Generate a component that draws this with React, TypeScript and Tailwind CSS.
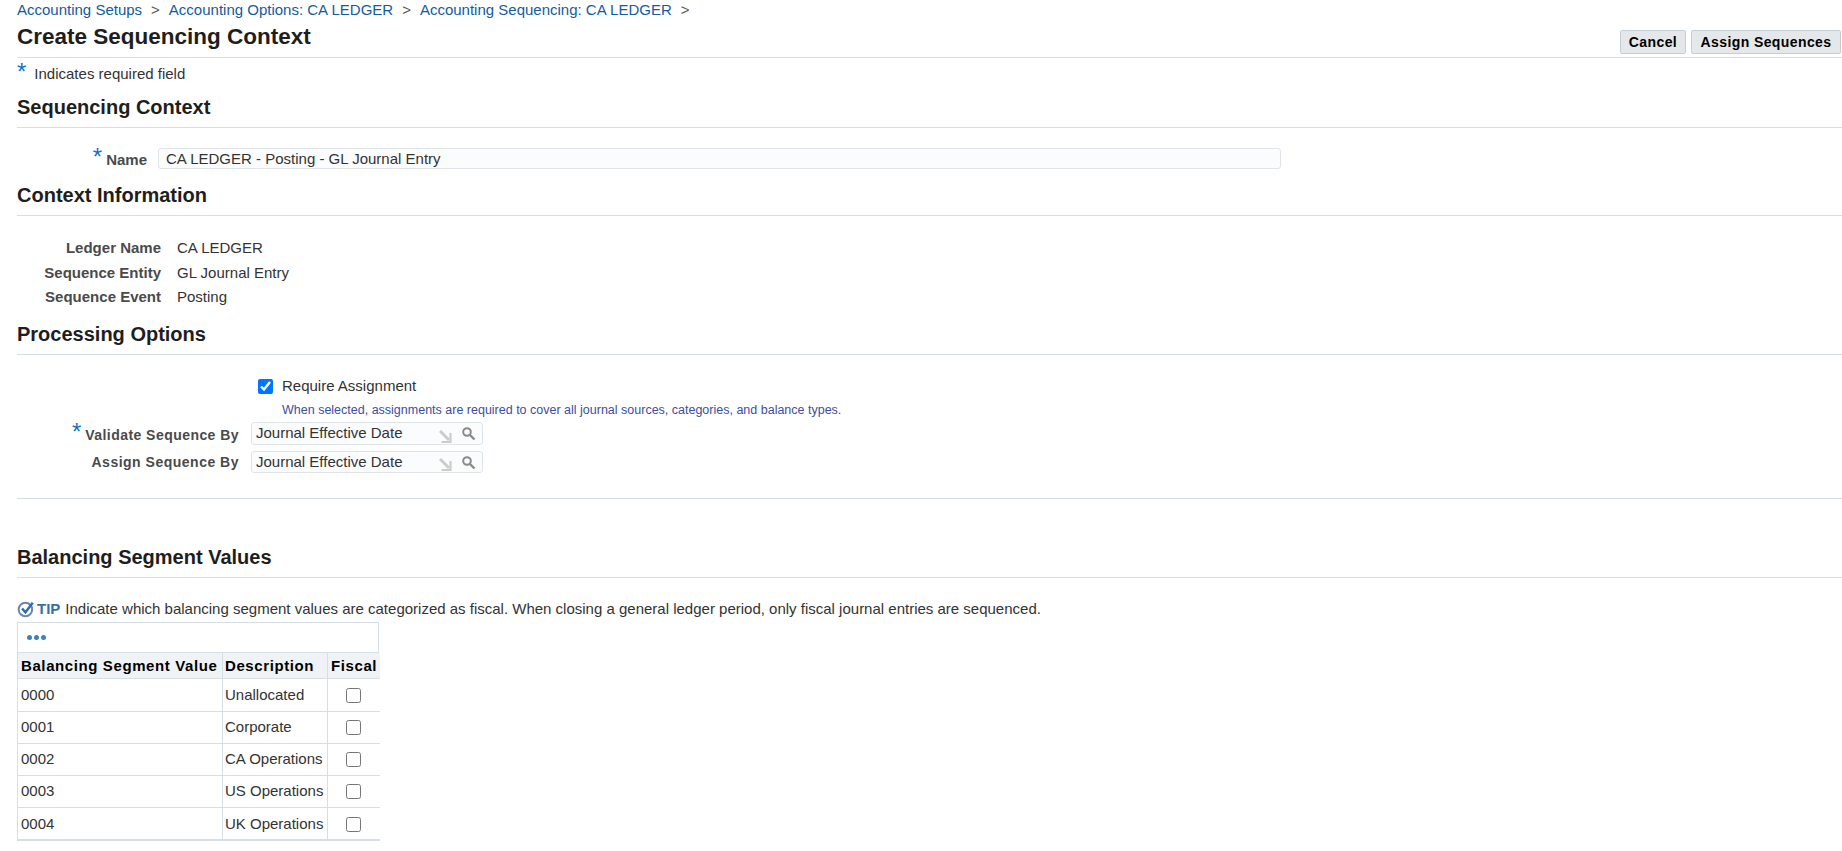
import React, { FC } from "react";

const Star = ({ className = "" }: { className?: string }) => (
  <span className={`text-[24px] leading-[14px] font-normal text-[#0f72c7] ${className}`}>*</span>
);

const SectionHeading = ({ title, className = "" }: { title: string; className?: string }) => (
  <div className={`flex h-[36px] items-center border-b border-[#d6dfe6] pb-[5px] ${className}`}>
    <h2 className="text-[20px] font-bold leading-[22px] text-[#1e1e1e]">{title}</h2>
  </div>
);

const SearchIcon = () => (
  <svg width="15" height="15" viewBox="0 0 15 15" fill="none" stroke="#8a8a8a" strokeWidth="2">
    <circle cx="6" cy="6" r="3.8" />
    <path d="M9 9l4.5 4.5" strokeWidth="2.4" />
  </svg>
);

const ArrowIcon = () => (
  <svg width="13" height="13" viewBox="0 0 13 13" fill="none">
    <path d="M1 1l9 9" stroke="#cccccc" strokeWidth="3" />
    <path d="M11.5 3v9h-9" stroke="#cccccc" strokeWidth="2.2" />
  </svg>
);

const LovInput = ({ value }: { value: string }) => (
  <div className="flex h-full w-[232px] items-center rounded-[3px] border border-[#dfe4ea] bg-[#fbfcfe] pl-[4px] pr-[6px] text-[15px] text-[#333333]">
    <span className="flex-1">{value}</span>
    <span className="mr-[9px] mt-[5px]">
      <ArrowIcon />
    </span>
    <SearchIcon />
  </div>
);

const rows = [
  ["0000", "Unallocated", "h-[33px]"],
  ["0001", "Corporate", "h-[32px]"],
  ["0002", "CA Operations", "h-[32px]"],
  ["0003", "US Operations", "h-[32px]"],
  ["0004", "UK Operations", "h-[33px]"],
];

const App: FC = () => {
  return (
    <div className="h-[851px] w-[1842px] overflow-hidden bg-white pl-[17px] font-['Liberation_Sans',Arial,sans-serif] text-[15px] text-[#333333]">
      <nav className="flex h-[20px] items-center text-[15px] text-[#145c9e]">
        <a>Accounting Setups</a>
        <span className="mx-[9px] text-[#555555]">&gt;</span>
        <a>Accounting Options: CA LEDGER</a>
        <span className="mx-[9px] text-[#555555]">&gt;</span>
        <a>Accounting Sequencing: CA LEDGER</a>
        <span className="mx-[9px] text-[#555555]">&gt;</span>
      </nav>

      <div className="flex h-[38px] items-start justify-between border-b border-[#d6dfe6]">
        <h1 className="mt-[4px] text-[22.5px] font-bold leading-[26px] text-[#1e1e1e]">Create Sequencing Context</h1>
        <div className="mt-[10px] mr-[1px] flex gap-[5px]">
          <button className="h-[24px] w-[66px] rounded-[2px] border border-[#c4ced7] bg-[#e4e8ea] text-[14px] font-bold tracking-[0.4px] text-black">
            Cancel
          </button>
          <button className="h-[24px] w-[150px] rounded-[2px] border border-[#c4ced7] bg-[#e4e8ea] text-[14px] font-bold tracking-[0.4px] text-black">
            Assign Sequences
          </button>
        </div>
      </div>

      <div className="flex h-[34px] items-start pt-[7px]">
        <Star />
        <span className="ml-[8px] mt-[1px] text-[15px] leading-[16px] text-[#333333]">Indicates required field</span>
      </div>

      <SectionHeading title="Sequencing Context" />

      <div className="mt-[20px] flex h-[21px] items-center">
        <div className="flex w-[130px] items-center justify-end">
          <Star className="mr-[4px] -mt-[4px]" />
          <label className="mt-[4px] text-[15px] font-bold text-[#4a4a4a]">Name</label>
        </div>
        <div className="ml-[11px] flex h-[21px] w-[1123px] items-center rounded-[3px] border border-[#dfe4ea] bg-[#fbfcfe] pl-[7px] pt-[2px] text-[15px] text-[#333333]">
          CA LEDGER - Posting - GL Journal Entry
        </div>
      </div>

      <SectionHeading title="Context Information" className="mt-[11px]" />

      <dl className="mt-[20px] grid grid-cols-[144px_1fr] gap-x-[16px] text-[15px] leading-[24.5px]">
        <dt className="text-right font-bold text-[#4a4a4a]">Ledger Name</dt>
        <dd>CA LEDGER</dd>
        <dt className="text-right font-bold text-[#4a4a4a]">Sequence Entity</dt>
        <dd>GL Journal Entry</dd>
        <dt className="text-right font-bold text-[#4a4a4a]">Sequence Event</dt>
        <dd>Posting</dd>
      </dl>

      <SectionHeading title="Processing Options" className="mt-[9.5px]" />

      <div className="mt-[21px] ml-[241px] flex h-[20px] items-center">
        <input type="checkbox" defaultChecked className="h-[15px] w-[15px] accent-[#0075ff]" />
        <span className="ml-[9px] text-[15px]">Require Assignment</span>
      </div>
      <p className="ml-[265px] mt-[6px] h-[16px] text-[12.5px] leading-[16px] text-[#3c4ea0]">
        When selected, assignments are required to cover all journal sources, categories, and balance types.
      </p>

      <div className="mt-[4px] flex h-[23px] items-center">
        <div className="flex w-[222px] items-center justify-end">
          <Star className="mr-[4px] -mt-[4px]" />
          <label className="mt-[3px] text-[14px] font-bold tracking-[0.45px] text-[#4a4a4a]">Validate Sequence By</label>
        </div>
        <div className="ml-[12px] h-full">
          <LovInput value="Journal Effective Date" />
        </div>
      </div>
      <div className="mt-[6px] flex h-[22px] items-center">
        <label className="w-[222px] text-right text-[14px] font-bold tracking-[0.5px] text-[#4a4a4a]">Assign Sequence By</label>
        <div className="ml-[12px] h-full">
          <LovInput value="Journal Effective Date" />
        </div>
      </div>

      <div className="mt-[25px] border-b border-[#d6dfe6]" />

      <SectionHeading title="Balancing Segment Values" className="mt-[43px]" />

      <div className="mt-[22px] flex h-[18px] items-center text-[15px]">
        <svg width="18" height="18" viewBox="0 0 16 16" fill="none" className="mr-[2px] -mt-[1px]">
          <circle cx="7.5" cy="8.5" r="6" stroke="#6d87a8" strokeWidth="1.8" />
          <path d="M4.5 7.5l3 3.5L14 2.5" stroke="#2d6cb0" strokeWidth="2.2" />
        </svg>
        <strong className="mr-[5px] text-[#3a6ea5]">TIP</strong>
        <span>
          Indicate which balancing segment values are categorized as fiscal. When closing a general ledger period, only fiscal journal entries are sequenced.
        </span>
      </div>

      <div className="mt-[4px] w-[362px]">
        <div className="flex h-[31px] items-center gap-[2px] border border-[#d6dfe6] pl-[9px]">
          <span className="h-[5px] w-[5px] rounded-full bg-[#3c82bd]" />
          <span className="h-[5px] w-[5px] rounded-full bg-[#3c82bd]" />
          <span className="h-[5px] w-[5px] rounded-full bg-[#3c82bd]" />
        </div>
        <table className="w-[362px] table-fixed border-collapse text-[15px]">
          <colgroup>
            <col className="w-[205px]" />
            <col className="w-[105px]" />
            <col className="w-[52px]" />
          </colgroup>
          <thead>
            <tr className="h-[25px] bg-[#f0f3f6] text-left text-black">
              <th className="overflow-hidden border-r border-b border-l border-[#d6dfe6] px-[3px] pt-[1px] font-bold tracking-[0.6px] whitespace-nowrap">Balancing Segment Value</th>
              <th className="overflow-hidden border-r border-b border-[#d6dfe6] px-[2px] pt-[1px] font-bold tracking-[0.6px] whitespace-nowrap">Description</th>
              <th className="overflow-hidden border-b border-[#d6dfe6] px-[3px] pt-[1px] font-bold tracking-[0.6px] whitespace-nowrap">Fiscal</th>
            </tr>
          </thead>
          <tbody>
            {rows.map(([code, description, height], i) => (
              <tr key={code} className={height}>
                <td className={`border-l border-r border-[#d6dfe6] px-[3px] pt-[1px] ${i === rows.length - 1 ? "border-b-2" : "border-b"}`}>{code}</td>
                <td className={`border-r border-[#d6dfe6] px-[2px] pt-[1px] whitespace-nowrap ${i === rows.length - 1 ? "border-b-2" : "border-b"}`}>{description}</td>
                <td className={`border-[#d6dfe6] text-center ${i === rows.length - 1 ? "border-b-2" : "border-b"}`}>
                  <input type="checkbox" className="h-[15px] w-[15px] align-middle" />
                </td>
              </tr>
            ))}
          </tbody>
        </table>
      </div>
    </div>
  );
};

export default App;
